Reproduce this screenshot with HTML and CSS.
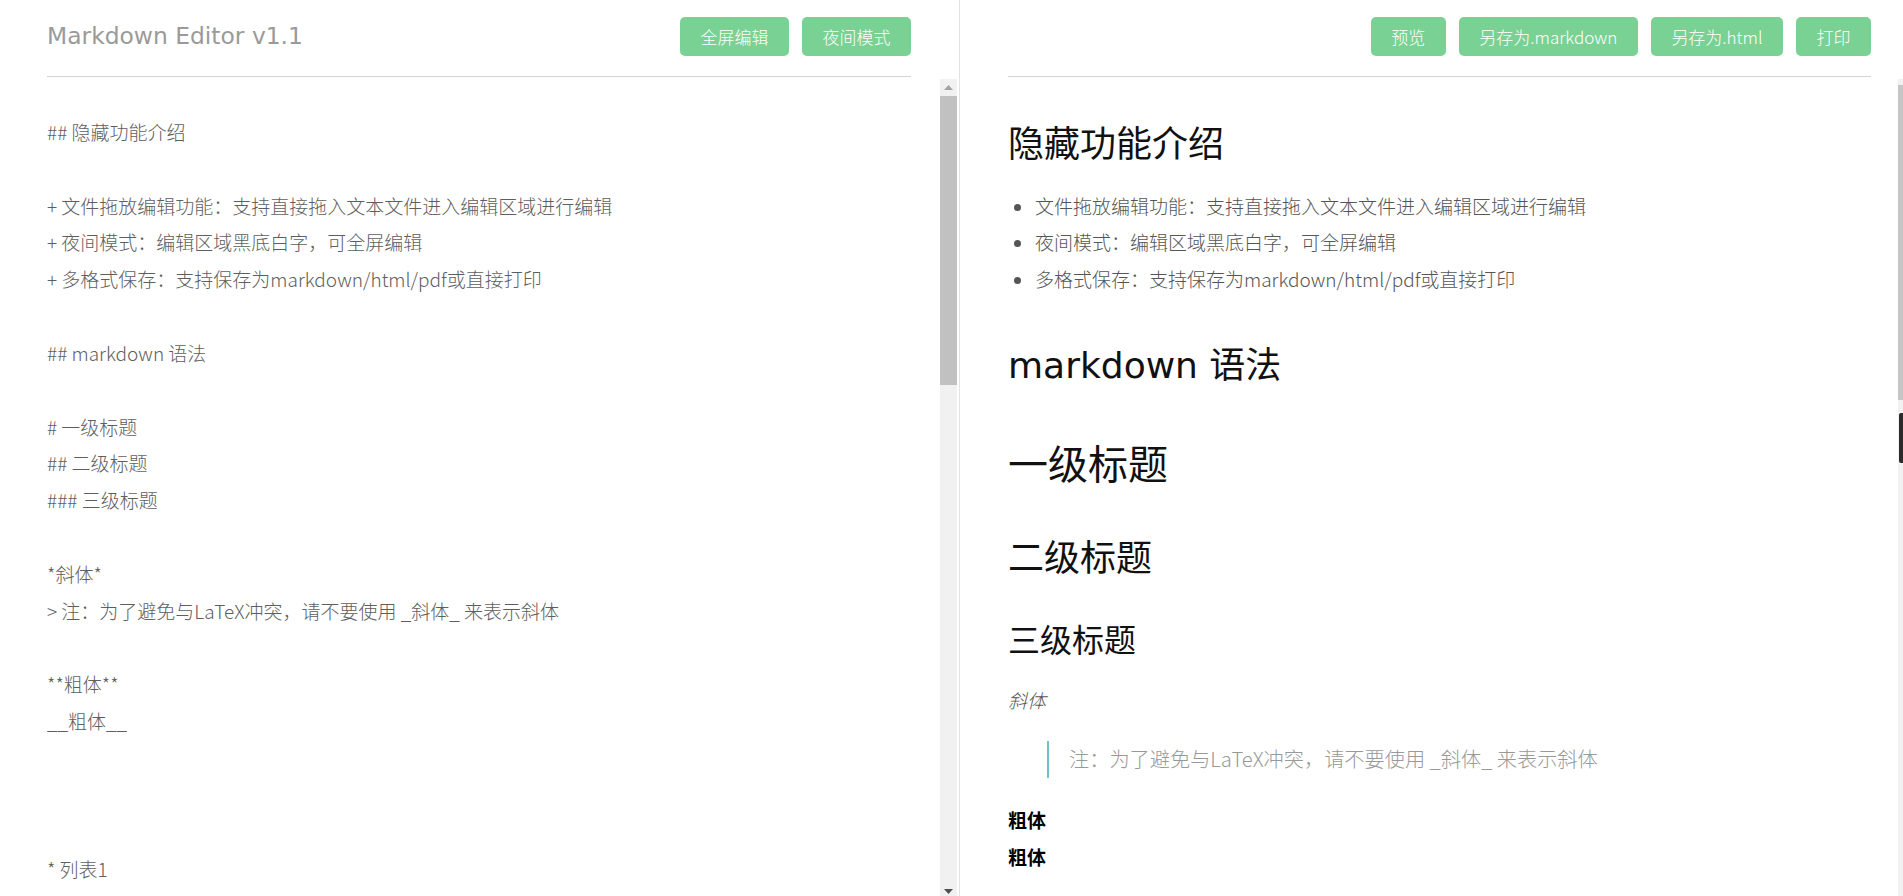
FILE: index.html
```html
<!DOCTYPE html>
<html lang="zh-CN">
<head>
<meta charset="utf-8">
<title>Markdown Editor v1.1</title>
<link rel="stylesheet" href="styles.css">
</head>
<body>
<div class="app">
  <section class="pane pane-editor">
    <header class="bar">
      <h1 class="brand">Markdown Editor v1.1</h1>
      <div class="actions">
        <button class="btn">全屏编辑</button>
        <button class="btn">夜间模式</button>
      </div>
    </header>
    <div class="scroll-row scroll-row-editor">
      <textarea class="editor" spellcheck="false">## 隐藏功能介绍

+ 文件拖放编辑功能：支持直接拖入文本文件进入编辑区域进行编辑
+ 夜间模式：编辑区域黑底白字，可全屏编辑
+ 多格式保存：支持保存为markdown/html/pdf或直接打印

## markdown 语法

# 一级标题
## 二级标题
### 三级标题

*斜体*
> 注：为了避免与LaTeX冲突，请不要使用 _斜体_ 来表示斜体

**粗体**
__粗体__



* 列表1
* 列表2
* 列表3

1. 有序列表1
2. 有序列表2
3. 有序列表3

[链接](https://github.com)

![图片](https://github.com/favicon.ico)

`行内代码`

~~~javascript
function hello() {
    console.log("Hello World!");
}
~~~

| 表头1 | 表头2 | 表头3 |
| --- | --- | --- |
| 内容1 | 内容2 | 内容3 |
| 内容4 | 内容5 | 内容6 |

---

## LaTeX 公式

行内公式：$E=mc^2$

块级公式：
$$
\sum_{i=1}^n a_i = 0
$$

$$
f(x) = \int_{-\infty}^{\infty} \hat f(\xi) e^{2 \pi i \xi x} d\xi
$$</textarea>
      <div class="vscroll" aria-hidden="true">
        <div class="vscroll-btn">
          <svg width="9" height="5" viewBox="0 0 9 5"><path d="M0 5 L4.5 0 L9 5Z" fill="#a3a3a3"/></svg>
        </div>
        <div class="vscroll-thumb"></div>
        <div class="vscroll-space"></div>
        <div class="vscroll-btn">
          <svg width="9" height="5" viewBox="0 0 9 5"><path d="M0 0 L9 0 L4.5 5Z" fill="#505050"/></svg>
        </div>
      </div>
    </div>
  </section>
  <section class="pane pane-preview">
    <header class="bar bar-right">
      <div class="actions">
        <button class="btn">预览</button>
        <button class="btn">另存为.markdown</button>
        <button class="btn">另存为.html</button>
        <button class="btn">打印</button>
      </div>
    </header>
    <div class="scroll-row">
      <article class="preview">
        <h2 class="md-h2 md-first">隐藏功能介绍</h2>
        <ul class="md-ul">
          <li>文件拖放编辑功能：支持直接拖入文本文件进入编辑区域进行编辑</li>
          <li>夜间模式：编辑区域黑底白字，可全屏编辑</li>
          <li>多格式保存：支持保存为markdown/html/pdf或直接打印</li>
        </ul>
        <h2 class="md-h2">markdown 语法</h2>
        <h1 class="md-h1">一级标题</h1>
        <h2 class="md-h2 md-after-h1">二级标题</h2>
        <h3 class="md-h3">三级标题</h3>
        <p class="md-p"><em>斜体</em></p>
        <blockquote class="md-quote">注：为了避免与LaTeX冲突，请不要使用 _斜体_ 来表示斜体</blockquote>
        <p class="md-p md-bold"><strong>粗体</strong><br><strong>粗体</strong></p>
        <ul class="md-ul">
          <li>列表1</li>
          <li>列表2</li>
          <li>列表3</li>
        </ul>
        <ol class="md-ul">
          <li>有序列表1</li>
          <li>有序列表2</li>
          <li>有序列表3</li>
        </ol>
        <p class="md-p"><a class="md-link" href="#">链接</a></p>
        <p class="md-p">图片</p>
        <p class="md-p"><code class="md-code">行内代码</code></p>
        <pre class="md-pre">function hello() {
    console.log("Hello World!");
}</pre>
        <table class="md-table">
          <tr><th>表头1</th><th>表头2</th><th>表头3</th></tr>
          <tr><td>内容1</td><td>内容2</td><td>内容3</td></tr>
          <tr><td>内容4</td><td>内容5</td><td>内容6</td></tr>
        </table>
        <hr class="md-hr">
        <h2 class="md-h2">LaTeX 公式</h2>
        <p class="md-p">行内公式：E=mc²</p>
        <p class="md-p">块级公式：</p>
        <p class="md-math">∑ a<sub>i</sub> = 0</p>
      </article>
      <div class="vscroll-slim" aria-hidden="true">
        <div class="vscroll-slim-thumb"></div>
        <div class="vscroll-slim-mark"></div>
      </div>
    </div>
  </section>
</div>
</body>
</html>
```

FILE: styles.css
```css
* {
  box-sizing: border-box;
}

html,
body {
  margin: 0;
  height: 100%;
  overflow: hidden;
  background: #fff;
}

body {
  font-family: "Noto Sans CJK SC", sans-serif;
}

.app {
  display: flex;
  height: 900px;
}

.pane {
  display: flex;
  flex-direction: column;
  min-width: 0;
}

.pane-editor {
  flex: none;
  width: 960px;
  border-right: 1px solid #e2e2e2;
}

.pane-preview {
  flex: 1;
}

.bar {
  flex: none;
  display: flex;
  align-items: center;
  justify-content: space-between;
  height: 77px;
  margin: 0 48px 0 47px;
  padding: 17px 0 20px;
  border-bottom: 1px solid #d4d4d4;
}

.bar-right {
  justify-content: flex-end;
  margin: 0 32px 0 48px;
}

.brand {
  margin: 0;
  font-family: "DejaVu Sans", "Noto Sans CJK SC", sans-serif;
  font-size: 23.4px;
  font-weight: normal;
  color: #9a9a9a;
  line-height: 1;
}

.actions {
  display: flex;
  gap: 13px;
}

.btn {
  height: 39px;
  padding: 0 20.5px;
  border: 0;
  border-radius: 5px;
  background: #79d193;
  color: #fff;
  font-family: "Noto Sans CJK SC", sans-serif;
  font-size: 17px;
  font-weight: 300;
  line-height: 39px;
  cursor: pointer;
}

.scroll-row {
  flex: 1;
  display: flex;
  min-height: 0;
  margin-top: 2px;
}

.scroll-row-editor {
  margin: 2px 2px 0 47px;
}

.editor {
  flex: 1;
  min-width: 0;
  padding: 35px 0;
  border: 0;
  outline: 0;
  resize: none;
  background: #fff;
  color: #5e5e5e;
  font-family: "Noto Sans CJK SC", sans-serif;
  font-size: 19px;
  font-weight: 300;
  line-height: 36.83px;
  overflow: hidden;
  white-space: pre-wrap;
}

.vscroll {
  flex: none;
  width: 17px;
  display: flex;
  flex-direction: column;
  background: #f1f1f1;
}

.vscroll-btn {
  flex: none;
  height: 17px;
  display: flex;
  align-items: center;
  justify-content: center;
}

.vscroll-thumb {
  flex: none;
  height: 289px;
  background: #c1c1c1;
}

.vscroll-space {
  flex: 1;
}

.vscroll-slim {
  flex: none;
  width: 5px;
  padding-top: 6px;
  background: #f1f1f1;
}

.vscroll-slim-thumb {
  height: 315px;
  background: #c6c6c6;
}

.vscroll-slim-mark {
  height: 50px;
  margin-top: 13px;
  margin-left: 1px;
  border-radius: 2px 0 0 2px;
  background: #2b2b2b;
}

.preview {
  flex: 1;
  min-width: 0;
  padding: 0 32px 140px 48px;
  overflow: hidden;
  color: #555;
  font-size: 19px;
  font-weight: 300;
  line-height: 36.8px;
}

.md-h1,
.md-h2,
.md-h3 {
  margin: 0;
  font-family: "DejaVu Sans", "Noto Sans CJK SC", sans-serif;
  font-weight: normal;
  color: #111;
}

.md-h2 {
  margin-top: 46px;
  font-size: 36px;
  line-height: 43px;
}

.md-first {
  margin-top: 43.5px;
}

.md-h1 {
  margin-top: 54.5px;
  font-size: 40px;
  line-height: 48px;
}

.md-after-h1 {
  margin-top: 47.5px;
}

.md-h3 {
  margin-top: 42.5px;
  font-size: 32px;
  line-height: 38px;
}

.md-ul {
  margin: 22px 0 0;
  padding-left: 27px;
}

.md-p {
  margin: 22px 0 0;
}

.md-bold {
  margin-top: 24px;
  color: #000;
}

.md-bold strong {
  font-weight: bold;
}

.md-quote {
  margin: 22px 0 0 39px;
  padding-left: 20px;
  border-left: 2px solid #6cc3c9;
  color: #999;
  font-size: 20.2px;
}

.md-link {
  color: #4183c4;
  text-decoration: none;
}

.md-code {
  padding: 2px 6px;
  background: #f5f5f5;
  border-radius: 3px;
  font-family: "DejaVu Sans Mono", monospace;
  font-size: 17px;
}

.md-pre {
  margin: 22px 0 0;
  padding: 16px;
  background: #f7f7f7;
  border-radius: 4px;
  font-family: "DejaVu Sans Mono", monospace;
  font-size: 17px;
  line-height: 28px;
}

.md-table {
  margin-top: 22px;
  border-collapse: collapse;
}

.md-table th,
.md-table td {
  padding: 4px 16px;
  border: 1px solid #ddd;
}

.md-hr {
  margin: 22px 0 0;
  border: 0;
  border-top: 1px solid #ddd;
}

.md-math {
  margin: 22px 0 0;
  text-align: center;
  font-family: "DejaVu Serif", serif;
  font-style: italic;
  color: #222;
}
```
